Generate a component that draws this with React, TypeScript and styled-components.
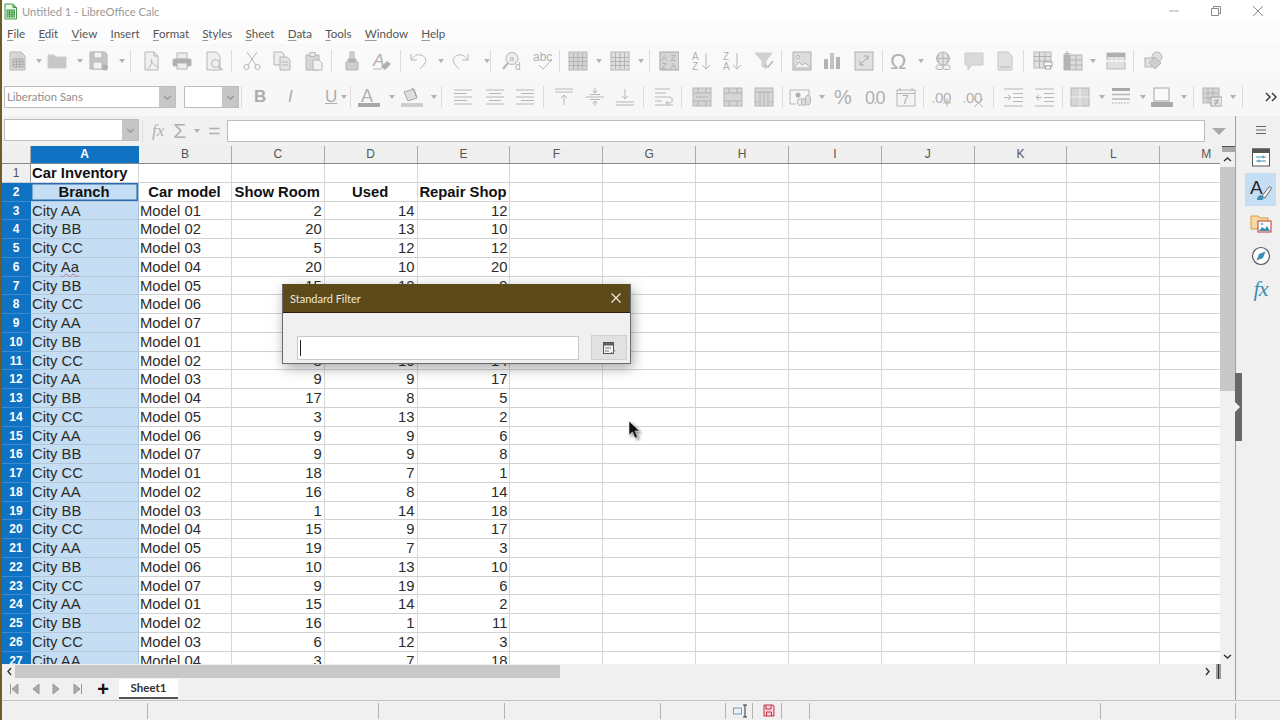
import React from 'react';
import styled, { createGlobalStyle } from 'styled-components';

const GlobalStyle = createGlobalStyle`
  html, body { margin: 0; padding: 0; background: #fff; }
  body { font-family: "Liberation Sans", Arial, sans-serif; }
`;

const Page = styled.div`
  position: relative;
  width: 1280px;
  height: 720px;
  box-sizing: border-box;
  border-left: 2px solid #6d5b28;
  overflow: hidden;
  display: flex;
  flex-direction: column;
  background: #f0f0f0;
`;

const TitleBar = styled.div`
  flex: none;
  height: 22px;
  background: #fff;
  display: flex;
  align-items: center;
  padding-left: 2px;
  gap: 5px;
  color: #9a9a9a;
  font: 11.2px Lato, sans-serif;
`;

const WindowControls = styled.div`
  margin-left: auto;
  display: flex;
  align-items: center;
  gap: 26px;
  padding-right: 14px;
  color: #999;
`;

const MenuBar = styled.div`
  flex: none;
  height: 22px;
  background: #fcfcfc;
  display: flex;
  align-items: center;
  padding-left: 5px;
  gap: 13.2px;
`;

const MenuItem = styled.span`
  font: 11.6px Lato, sans-serif;
  color: #555;
  u { text-decoration-color: #999; text-underline-offset: 2px; }
`;

const ToolRow = styled.div<{ $h: number; $bg: string }>`
  flex: none;
  height: ${(p) => p.$h}px;
  background: ${(p) => p.$bg};
  display: flex;
  align-items: center;
  overflow: hidden;
`;

const Slot = styled.div`
  flex: none;
  display: flex;
  align-items: center;
  height: 100%;
`;

const Sep = styled.div`
  width: 1px;
  height: 22px;
  background: #dcdcdc;
`;

const Caret = styled.div`
  width: 0;
  height: 0;
  border-left: 3.5px solid transparent;
  border-right: 3.5px solid transparent;
  border-top: 4px solid #b0b0b0;
`;

const Glyph = styled.span<{ $bold?: boolean; $italic?: boolean; $under?: boolean; $size?: number }>`
  color: #adadad;
  font-family: "Liberation Sans", sans-serif;
  font-size: ${(p) => p.$size || 17}px;
  font-weight: ${(p) => (p.$bold ? 700 : 400)};
  font-style: ${(p) => (p.$italic ? 'italic' : 'normal')};
  text-decoration: ${(p) => (p.$under ? 'underline' : 'none')};
`;

const Svg = styled.svg`
  display: block;
  flex: none;
  fill: none;
  stroke: #b6b6b6;
  stroke-width: 1;
  text {
    stroke: none;
    fill: #b0b0b0;
    font-family: "Liberation Sans", sans-serif;
  }
`;

const ComboBox = styled.div<{ $w: number }>`
  width: ${(p) => p.$w}px;
  height: 22px;
  box-sizing: border-box;
  display: flex;
  background: #fff;
  border: 1px solid #bdbdbd;
`;

const ComboText = styled.div`
  flex: 1;
  padding-left: 2px;
  font: 11.3px/20px Lato, sans-serif;
  color: #8e8e8e;
`;

const ComboButton = styled.div`
  flex: none;
  width: 16px;
  background: #c6c6c6;
  display: flex;
  align-items: center;
  justify-content: center;
`;

const Body = styled.div`
  flex: 1;
  min-height: 0;
  display: flex;
`;

const Main = styled.div`
  flex: none;
  width: 1233px;
  display: flex;
  flex-direction: column;
`;

const FormulaBar = styled.div`
  flex: none;
  height: 30px;
  display: flex;
  align-items: center;
  padding-left: 2px;
  background: #f1f1f1;
`;

const FormulaInput = styled.div`
  width: 978px;
  height: 22px;
  box-sizing: border-box;
  margin-left: 223px;
  background: #fff;
  border: 1px solid #bdbdbd;
`;

const FormulaTools = styled.div`
  position: absolute;
  left: 140px;
  top: 116px;
  height: 30px;
  display: flex;
  align-items: center;
`;

const NameBox = styled(ComboBox)`
  position: absolute;
  left: 2px;
  top: 119px;
`;

const FormulaCaret = styled.div`
  margin-left: 7px;
  width: 0;
  height: 0;
  border-left: 7px solid transparent;
  border-right: 7px solid transparent;
  border-top: 7px solid #a9a9a9;
`;

const SheetArea = styled.div`
  flex: none;
  height: 518px;
  display: flex;
`;

const SheetColumn = styled.div`
  flex: none;
  width: 1218px;
  display: flex;
  flex-direction: column;
  overflow: hidden;
`;

const tracks = '29px 108px repeat(12, 92.85px)';

const ColumnHeaders = styled.div`
  flex: none;
  height: 18px;
  display: grid;
  grid-template-columns: ${tracks};
  background: #efefef;
  box-sizing: border-box;
  border-bottom: 1px solid #888;
`;

const ColumnHeader = styled.div<{ $sel?: boolean }>`
  box-sizing: border-box;
  text-align: center;
  font-size: 12px;
  line-height: 17px;
  color: ${(p) => (p.$sel ? '#fff' : '#555')};
  font-weight: ${(p) => (p.$sel ? 700 : 400)};
  background: ${(p) => (p.$sel ? '#0f72c3' : 'transparent')};
  border-right: 1px solid ${(p) => (p.$sel ? '#0f72c3' : '#aaa')};
`;

const Grid = styled.div`
  flex: 1;
  min-height: 0;
  overflow: hidden;
  display: grid;
  grid-template-columns: ${tracks};
  grid-auto-rows: 18.76px;
  background: #fff;
`;

const RowHeader = styled.div<{ $sel?: boolean }>`
  box-sizing: border-box;
  text-align: center;
  font-size: 12px;
  line-height: 18px;
  color: ${(p) => (p.$sel ? '#fff' : '#555')};
  font-weight: ${(p) => (p.$sel ? 700 : 400)};
  background: ${(p) => (p.$sel ? '#0f72c3' : '#f0f0f0')};
  border-bottom: 1px solid ${(p) => (p.$sel ? '#3b8ad0' : '#ccc')};
  border-right: 1px solid ${(p) => (p.$sel ? '#0f72c3' : '#999')};
`;

const Cell = styled.div<{ $sel?: boolean; $bold?: boolean; $align?: string; $cursor?: boolean }>`
  box-sizing: border-box;
  padding: 0 2px 0 1px;
  font-size: 14.8px;
  line-height: 18px;
  white-space: nowrap;
  color: ${(p) => (p.$bold ? '#111' : '#2b2b2b')};
  font-weight: ${(p) => (p.$bold ? 700 : 400)};
  text-align: ${(p) => p.$align || 'left'};
  background: ${(p) => (p.$sel ? '#c5def3' : '#fff')};
  border-right: 1px solid ${(p) => (p.$sel ? '#a4c3de' : '#d8d8d8')};
  border-bottom: 1px solid ${(p) => (p.$sel ? '#b4c8da' : '#d2d2d2')};
  box-shadow: ${(p) => (p.$cursor ? 'inset 0 0 0 1.5px #2a6cb3' : 'none')};
`;

const Squiggle = styled.span`
  text-decoration: underline wavy #c0708a 1px;
  text-underline-offset: 1px;
`;

const VScroll = styled.div`
  flex: none;
  width: 15px;
  display: flex;
  flex-direction: column;
  background: #f0f0f0;
`;

const SplitMark = styled.div`
  flex: none;
  height: 6px;
  margin: 0 0 0 2px;
  background: #a8a8a8;
  border-top: 1px solid #555;
  box-sizing: border-box;
`;

const ScrollArrow = styled.div`
  flex: none;
  height: 15px;
  display: flex;
  align-items: center;
  justify-content: center;
`;

const VThumb = styled.div`
  flex: none;
  height: 224px;
  background: #c8c8c8;
`;

const Spacer = styled.div`
  flex: 1;
`;

const HScroll = styled.div`
  flex: none;
  height: 15px;
  padding-left: 2px;
  display: flex;
  align-items: center;
  background: #f0f0f0;
`;

const HArrow = styled.div`
  flex: none;
  width: 11px;
  display: flex;
  align-items: center;
  justify-content: center;
`;

const HThumb = styled.div`
  flex: none;
  width: 545px;
  height: 13px;
  background: #c8c8c8;
`;

const HHandle = styled.div`
  flex: none;
  width: 5px;
  height: 15px;
  margin: 0 14px 0 3px;
  background: #9c9c9c;
  display: flex;
  justify-content: center;
  &::after {
    content: '';
    width: 1px;
    background: #333;
  }
`;

const TabBar = styled.div`
  flex: 1;
  display: flex;
  align-items: flex-start;
  padding-left: 3px;
  box-sizing: border-box;
  background: #f0f0f0;
`;

const TabNav = styled.div`
  width: 20.5px;
  height: 20px;
  display: flex;
  align-items: center;
  justify-content: center;
`;

const AddTab = styled.div`
  width: 32px;
  height: 20px;
  font: 700 20px/20px "Liberation Sans", sans-serif;
  color: #111;
  text-align: center;
`;

const Tab = styled.div`
  width: 59px;
  height: 20px;
  box-sizing: border-box;
  background: #fff;
  border-bottom: 2px solid #555;
  text-align: center;
  font: 700 11.5px/18px Lato, sans-serif;
  color: #333;
`;

const Sidebar = styled.div`
  flex: 1;
  box-sizing: border-box;
  border-left: 1px solid #a0a0a0;
  padding: 0 0 0 9px;
  background: #f0f0f0;
  display: flex;
  flex-direction: column;
`;

const SideItem = styled.div<{ $active?: boolean; $h?: number }>`
  flex: none;
  box-sizing: border-box;
  width: 31px;
  height: ${(p) => p.$h || 33}px;
  display: flex;
  align-items: center;
  justify-content: center;
  background: ${(p) => (p.$active ? '#c5def3' : 'transparent')};
`;

const SideMenu = styled(SideItem)`
  padding-top: 4px;
`;

const StatusBar = styled.div`
  flex: none;
  height: 20px;
  box-sizing: border-box;
  border-top: 1px solid #c4c4c4;
  background: #f0f0f0;
  display: flex;
  align-items: center;
`;

const StatusCell = styled.div<{ $w: number; $plain?: boolean; $pad?: number }>`
  flex: none;
  box-sizing: border-box;
  width: ${(p) => p.$w}px;
  height: 16px;
  padding-left: ${(p) => p.$pad || 0}px;
  display: flex;
  align-items: center;
  justify-content: center;
  border-right: 1px solid ${(p) => (p.$plain ? 'transparent' : '#b4b4b4')};
`;

const Dialog = styled.div`
  position: absolute;
  left: 280px;
  top: 284px;
  width: 349px;
  height: 80px;
  box-sizing: border-box;
  border: 1px solid #6b6b6b;
  border-top: none;
  background: #f0f0f0;
  box-shadow: 2px 4px 12px rgba(0, 0, 0, 0.35);
  display: flex;
  flex-direction: column;
`;

const DialogTitle = styled.div`
  flex: none;
  height: 29px;
  box-sizing: border-box;
  padding: 0 8px 0 7px;
  background: #5c4a1b;
  border-bottom: 1px solid #2c1c08;
  display: flex;
  align-items: center;
  justify-content: space-between;
  color: #ece8da;
  font: 11px Lato, sans-serif;
`;

const DialogBody = styled.div`
  flex: 1;
  display: flex;
  align-items: flex-end;
  gap: 12px;
  padding: 0 3px 3px 14px;
`;

const RefInput = styled.div`
  width: 283px;
  height: 24px;
  box-sizing: border-box;
  background: #fff;
  border: 1px solid #c8c8c8;
  padding: 3px 0 0 2px;
  &::before {
    content: '';
    display: block;
    width: 1px;
    height: 16px;
    background: #222;
  }
`;

const RefButton = styled.div`
  width: 36px;
  height: 25px;
  box-sizing: border-box;
  background: #e1e1e1;
  border: 1px solid #cfcfcf;
  display: flex;
  align-items: center;
  justify-content: center;
`;

const SplitHandle = styled.div`
  position: absolute;
  left: 1233px;
  top: 373px;
  width: 7px;
  height: 68px;
  background: #686868;
  display: flex;
  align-items: center;
  &::after {
    content: '';
    border-left: 5px solid #f4f4f4;
    border-top: 5px solid transparent;
    border-bottom: 5px solid transparent;
  }
`;

const Pointer = styled.div`
  position: absolute;
  left: 626px;
  top: 420px;
  filter: drop-shadow(2px 2px 1.5px rgba(0, 0, 0, 0.45));
`;

const FILL = '#d6d6d6';
const MID = '#c6c6c6';
const LINE = '#b2b2b2';

const gridLines = (
  <path d="M1 6.5h18M1 10.5h18M1 14.5h18M5.5 2v16M10 2v16M14.5 2v16" stroke={LINE} />
);

const hLines = (ys: [number, number][]) =>
  ys.map(([y, w], i) => {
    return <line key={i} x1={w < 0 ? 19 + w : 1} x2={w < 0 ? 19 : 1 + w} y1={y} y2={y} />;
  });

const ICONS: Record<string, React.ReactNode> = {
  new: (
    <>
      <path d="M2 1h11l4 4v14H2z" fill={FILL} />
      <path d="M5 8h10v8H5zM5 10.7h10M5 13.3h10M8.3 8v8M11.7 8v8" stroke="#a5a5a5" />
    </>
  ),
  open: <path d="M1 4h6l2 2h10v11H1z" fill={MID} stroke="#cdcdcd" />,
  save: (
    <>
      <path d="M1 1h15l2 2v15H1z" fill={MID} />
      <rect x="5" y="1" width="8" height="6" fill="#f2f2f2" />
      <rect x="4" y="11" width="9" height="7" fill="#f2f2f2" />
      <circle cx="16" cy="16.5" r="3" fill="#b0b0b0" stroke="none" />
    </>
  ),
  pdf: (
    <>
      <path d="M3 1h9l4 4v14H3z" fill="#f0f0f0" />
      <path d="M12 1v4h4M6 18c3-3 4-7 3.5-9s-1 4 7 7" />
    </>
  ),
  print: (
    <>
      <rect x="5" y="2" width="10" height="6" fill="#eee" />
      <rect x="1" y="8" width="18" height="7" rx="1" fill="#aeaeae" />
      <rect x="5" y="12" width="10" height="6" fill="#eee" />
    </>
  ),
  preview: (
    <>
      <path d="M3 1h9l4 4v14H3z" fill="#f0f0f0" />
      <circle cx="11.5" cy="12.5" r="4" fill="#eee" />
      <path d="M14.5 15.5l4 3.5" strokeWidth="1.5" />
    </>
  ),
  cut: (
    <>
      <circle cx="4.5" cy="16" r="2.6" />
      <circle cx="15.5" cy="16" r="2.6" />
      <path d="M6 14L15 1M14 14L5 1" />
    </>
  ),
  copy: (
    <>
      <path d="M2 1h8l2 2v11H2z" fill="#eee" />
      <path d="M8 6h7l3 3v10H8z" fill="#e4e4e4" />
      <path d="M10 11h6M10 14h6" />
    </>
  ),
  paste: (
    <>
      <path d="M2 4h13v15H2z" fill={FILL} />
      <rect x="6" y="1.5" width="5" height="4" fill="#eee" />
      <path d="M9 9h6l3 3v7H9z" fill="#f2f2f2" />
    </>
  ),
  clone: (
    <>
      <rect x="8" y="1" width="4" height="7" fill="#d4d4d4" />
      <path d="M6 8h8v3H6z" fill="#b4b4b4" />
      <path d="M4 11h12v8H4z" fill="#cdcdcd" />
    </>
  ),
  clear: (
    <>
      <text x="1" y="15" fontSize="17" fontStyle="italic">A</text>
      <path d="M9 16l6-6 4 3-6 6z" fill="#b0b0b0" stroke="none" />
      <path d="M1 18h9" />
    </>
  ),
  undo: <path d="M2 3v6h6M2 9c3-4 6-6 10-5 4 1 6 5 4 8-1 2-3 4-5 6" />,
  redo: <path d="M18 3v6h-6M18 9c-3-4-6-6-10-5-4 1-6 5-4 8 1 2 3 4 5 6" />,
  find: (
    <>
      <circle cx="10" cy="7.5" r="6" fill="#eee" />
      <path d="M6 12L1 18" strokeWidth="2" />
      <text x="7.5" y="10" fontSize="8">a</text>
      <text x="13" y="19" fontSize="10">d</text>
    </>
  ),
  spell: (
    <>
      <text x="0" y="10" fontSize="12">abc</text>
      <path d="M6 14l4 4 9-9" />
    </>
  ),
  rows: (
    <>
      <rect x="1" y="1" width="18" height="18" fill={FILL} />
      {gridLines}
    </>
  ),
  cols: (
    <>
      <rect x="1" y="1" width="18" height="18" fill="#e0e0e0" />
      {gridLines}
    </>
  ),
  sort: (
    <>
      <rect x="1" y="1" width="19" height="18" fill={FILL} stroke="#a5a5a5" />
      <text x="2.5" y="9.5" fontSize="8.5">A</text>
      <text x="2.5" y="17.5" fontSize="8.5">Z</text>
      <text x="11.5" y="9.5" fontSize="8.5">Z</text>
      <text x="11.5" y="17.5" fontSize="8.5">A</text>
    </>
  ),
  asc: (
    <>
      <text x="0" y="9" fontSize="10">A</text>
      <text x="0" y="19" fontSize="10">Z</text>
      <path d="M14 2v16M10 14l4 4 4-4" />
    </>
  ),
  desc: (
    <>
      <text x="0" y="9" fontSize="10">Z</text>
      <text x="0" y="19" fontSize="10">A</text>
      <path d="M14 2v16M10 14l4 4 4-4" />
    </>
  ),
  filter: (
    <>
      <path d="M1 2h17l-6 8v8l-4-3v-5z" fill="#d0d0d0" stroke="#d0d0d0" />
      <path d="M11 14l3 2 5-6" strokeWidth="1.5" />
    </>
  ),
  image: (
    <>
      <rect x="1" y="1" width="18" height="18" fill="#dcdcdc" stroke="#b0b0b0" />
      <path d="M2 17l5-6 3 3 3-2 6 5z" fill="#f2f2f2" />
      <circle cx="6" cy="6" r="1.6" fill="#eee" />
    </>
  ),
  chart: (
    <>
      <rect x="2" y="8" width="4" height="10" fill="#b4b4b4" stroke="none" />
      <rect x="8" y="2" width="4" height="16" fill="#c2c2c2" stroke="none" />
      <rect x="14" y="6" width="4" height="12" fill="#b4b4b4" stroke="none" />
    </>
  ),
  pivot: (
    <>
      <rect x="1" y="1" width="18" height="18" fill="#e0e0e0" stroke="#b0b0b0" />
      <path d="M6 14L14 6M10 5h4v4M6 10v4h4" stroke="#a8a8a8" />
    </>
  ),
  omega: <text x="1" y="18" fontSize="22">Ω</text>,
  link: (
    <>
      <circle cx="10" cy="7.5" r="6.5" fill="#e0e0e0" />
      <path d="M3.5 7.5h13M10 1v13M6.5 2c-2 3-2 7 0 10.5M13.5 2c2 3 2 7 0 10.5" />
      <rect x="3" y="14" width="7" height="4.5" rx="2" fill="#f2f2f2" />
      <rect x="10" y="14" width="7" height="4.5" rx="2" fill="#f2f2f2" />
    </>
  ),
  comment: <path d="M1 2h18v12H8l-4 5v-5H1z" fill="#dadada" stroke="#cbcbcb" />,
  header: (
    <>
      <path d="M3 1h10l4 4v14H3z" fill="#e0e0e0" stroke="#c6c6c6" />
      <path d="M5 16h10" />
    </>
  ),
  printRange: (
    <>
      <rect x="1" y="1" width="17" height="16" fill="#e0e0e0" />
      <path d="M1 5.5h17M1 10h17M6.5 1v16M12 1v16" stroke={LINE} />
      <rect x="11" y="11" width="8" height="4" fill="#fff" stroke="#a5a5a5" />
      <rect x="12.5" y="15" width="5" height="3" fill="#fff" stroke="#a5a5a5" />
    </>
  ),
  freeze: (
    <>
      <rect x="1" y="4" width="18" height="15" fill="#dcdcdc" />
      <rect x="1" y="4" width="6" height="15" fill="#b4b4b4" stroke="none" />
      <path d="M1 9h18M1 14h18M7 4v15M13 4v15" stroke={LINE} />
      <path d="M4 0v5M1.5 2.5h5" stroke="#b0b0b0" />
    </>
  ),
  split: (
    <>
      <rect x="1" y="2" width="18" height="16" fill="#e0e0e0" />
      <rect x="1" y="2" width="18" height="4" fill="#b0b0b0" stroke="none" />
      <path d="M0 10h20" stroke="#fff" strokeWidth="1.5" strokeDasharray="3 1.5" />
    </>
  ),
  draw: (
    <>
      <circle cx="13" cy="6" r="5" fill="#e0e0e0" />
      <rect x="1" y="7" width="9" height="9" fill="#e0e0e0" />
      <path d="M11 6l6 6-6 6-6-6z" fill="#cfcfcf" />
    </>
  ),
  fontColor: (
    <>
      <text x="3" y="14.5" fontSize="18">A</text>
      <rect x="0" y="16" width="22" height="4.5" fill="#a9a9a9" stroke="none" />
    </>
  ),
  bgColor: (
    <>
      <path d="M3 5l10-3 3 9-9 3z" fill="#dedede" stroke="#a8a8a8" />
      <path d="M11 1c2 3 3 3 4 8" stroke="#999" />
      <rect x="0" y="16" width="22" height="4.5" fill="#cfcfcf" stroke="none" />
    </>
  ),
  alignLeft: <>{hLines([[3, 18], [6.5, 13], [10, 18], [13.5, 13], [17, 18]])}</>,
  alignCenter: <path d="M1 3h18M4 6.5h12M1 10h18M4 13.5h12M1 17h18" />,
  alignRight: <>{hLines([[3, 18], [6.5, -13], [10, 18], [13.5, -13], [17, 18]])}</>,
  vTop: <path d="M1 2h18M1 5h18M10 18V8M7 11l3-3 3 3" />,
  vMid: <path d="M1 10h18M5 7.5h10M5 12.5h10M10 1v5M7.5 3.5L10 6l2.500-2.500M10 19v-5M7.500 16.500L10 14l2.500 2.500" />,
  vBot: <path d="M1 18h18M1 15h18M10 2v10M7 9l3 3 3-3" />,
  wrap: <path d="M1 2h15M1 6h11M1 10h15c3 0 3 6 0 6h-4M14 14l-2 2 2 2M1 14h7M1 18h18" />,
  merge: (
    <>
      <rect x="1" y="1" width="18" height="18" fill={FILL} />
      <path d="M1 6h18M1 14h18M6 1v5M14 1v5M6 14v5M14 14v5M4 10h12" stroke={LINE} />
    </>
  ),
  mergeOnly: (
    <>
      <rect x="1" y="1" width="18" height="18" fill={FILL} />
      <path d="M1 6h18M1 14h18M6 1v5M14 1v5M6 14v5M14 14v5" stroke={LINE} />
    </>
  ),
  splitCells: (
    <>
      <rect x="1" y="1" width="18" height="18" fill={FILL} />
      <path d="M1 5h18M6 5v14M10 5v14M14 5v14M1 15h4M15 15h4" stroke={LINE} />
    </>
  ),
  currency: (
    <>
      <path d="M7 17H1V3h19v5" />
      <circle cx="9" cy="8" r="2.500" fill="#b0b0b0" stroke="none" />
      <ellipse cx="11" cy="15" rx="2.500" ry="3.500" fill="#eee" />
      <ellipse cx="15" cy="15" rx="2.500" ry="3.500" fill="#ddd" />
      <ellipse cx="19" cy="13" rx="2.500" ry="5" fill="#ddd" />
    </>
  ),
  number: (
    <>
      <text x="0" y="17" fontSize="18">0</text>
      <text x="10.5" y="17" fontSize="18">0</text>
      <circle cx="10.500" cy="16" r="0.800" fill="#aaa" stroke="none" />
    </>
  ),
  date: (
    <>
      <rect x="1" y="3" width="18" height="16" fill="#f4f4f4" />
      <path d="M1 6.500h18M4 1v3M16 1v3" />
      <text x="6" y="17" fontSize="12">7</text>
    </>
  ),
  decPlus: (
    <>
      <circle cx="1.500" cy="15" r="0.800" fill="#aaa" stroke="none" />
      <text x="3" y="15.500" fontSize="15">0</text>
      <text x="11" y="15.500" fontSize="15">0</text>
      <path d="M15 11v9M11 16h8" />
    </>
  ),
  decMinus: (
    <>
      <circle cx="1.500" cy="15" r="0.800" fill="#aaa" stroke="none" />
      <text x="3" y="15.500" fontSize="15">0</text>
      <text x="11" y="15.500" fontSize="15">0</text>
      <path d="M11 12l9 8M20 12l-9 8" />
    </>
  ),
  indent: <path d="M1 2h19M10 6.500h10M10 10.500h10M10 14.500h10M1 19h19M1 10.500h6M5 8l3 2.500L5 13" />,
  outdent: <path d="M1 2h19M10 6.500h10M10 10.500h10M10 14.500h10M1 19h19M2 10.500h6M5 8l-3 2.500L5 13" />,
  borders: (
    <>
      <rect x="1" y="1" width="18" height="18" fill={FILL} />
      <path d="M1 10h18M10 1v18" stroke="#eee" />
    </>
  ),
  borderStyle: (
    <>
      <rect x="0" y="1" width="18" height="3" fill="#a8a8a8" stroke="none" />
      <path d="M0 7.500h18M0 12h18" strokeWidth="1.500" />
      <path d="M0 16h18" strokeDasharray="2 1" />
    </>
  ),
  borderColor: (
    <>
      <rect x="3" y="1" width="15" height="13" fill="#fafafa" stroke="#a5a5a5" />
      <rect x="0" y="15" width="22" height="5" fill="#a9a9a9" stroke="none" />
    </>
  ),
  cond: (
    <>
      <rect x="1" y="1" width="16" height="15" fill={FILL} />
      <path d="M1 6h16M1 11h16M6 1v15M11 1v15" stroke={LINE} />
      <rect x="9" y="10" width="11" height="9" fill="#e6e6e6" stroke="#a5a5a5" />
      <path d="M12 13.500h5M12 16h5M16 12l-3 6" stroke="#a5a5a5" />
    </>
  ),
};

const Icon = ({ name, w = 20, h = 20 }: { name: string; w?: number; h?: number }) => (
  <Svg width={w} height={h} viewBox={`0 0 ${w} ${h}`}>
    {ICONS[name]}
  </Svg>
);

type Tool = [number, string];

const TOOLS_TOP: Tool[] = [
  [8, 'new'], [36, '^'], [47, 'open'], [77, '^'], [89, 'save'], [119, '^'], [130, '|'],
  [142, 'pdf'], [172, 'print'], [204, 'preview'], [231, '|'], [242, 'cut'], [272, 'copy'],
  [304, 'paste'], [331, '|'], [342, 'clone'], [372, 'clear'], [400, '|'], [409, 'undo'],
  [438, '^'], [450, 'redo'], [484, '^'], [490, '|'], [502, 'find'], [533, 'spell'],
  [559, '|'], [568, 'rows'], [596, '^'], [610, 'cols'], [638, '^'], [649, '|'], [659, 'sort'],
  [692, 'asc'], [723, 'desc'], [754, 'filter'], [781, '|'], [792, 'image'], [822, 'chart'],
  [854, 'pivot'], [882, '|'], [889, 'omega'], [918, '^'], [933, 'link'], [964, 'comment'],
  [995, 'header'], [1023, '|'], [1033, 'printRange'], [1063, 'freeze'], [1090, '^'],
  [1106, 'split'], [1133, '|'], [1144, 'draw'],
];

const TOOLS_BOTTOM: Tool[] = [
  [241, '|'], [254, 'B'], [288, 'I'], [325, 'U'], [341, '^'], [350, '|'], [358, 'fontColor'],
  [389, '^'], [401, 'bgColor'], [431, '^'], [441, '|'], [453, 'alignLeft'], [485, 'alignCenter'],
  [515, 'alignRight'], [543, '|'], [554, 'vTop'], [585, 'vMid'], [615, 'vBot'], [643, '|'],
  [654, 'wrap'], [681, '|'], [692, 'merge'], [723, 'mergeOnly'], [754, 'splitCells'],
  [782, '|'], [789, 'currency'], [819, '^'], [834, '%'], [865, 'number'], [896, 'date'],
  [923, '|'], [932, 'decPlus'], [963, 'decMinus'], [993, '|'], [1003, 'indent'],
  [1034, 'outdent'], [1062, '|'], [1070, 'borders'], [1099, '^'], [1112, 'borderStyle'],
  [1140, '^'], [1151, 'borderColor'], [1181, '^'], [1193, '|'], [1202, 'cond'], [1230, '^'],
  [1242, '|'], [1264, '>>'],
];

const WIDE = ['fontColor', 'bgColor', 'borderColor', 'currency', 'decPlus', 'decMinus', 'number', 'omega'];

const Chevrons = () => (
  <Svg width="14" height="12" viewBox="0 0 14 12" style={{ stroke: '#333', strokeWidth: 1.4 }}>
    <path d="M2 2l4 4-4 4M8 2l4 4-4 4" />
  </Svg>
);

const renderTool = (name: string) => {
  if (name === '|') return <Sep />;
  if (name === '^') return <Caret />;
  if (name === 'B') return <Glyph $bold>B</Glyph>;
  if (name === 'I') return <Glyph $italic>I</Glyph>;
  if (name === 'U') return <Glyph $under>U</Glyph>;
  if (name === '%') return <Glyph $size={20}>%</Glyph>;
  if (name === '>>') return <Chevrons />;
  return <Icon name={name} w={WIDE.includes(name) ? 22 : 20} />;
};

const Tools = ({ items }: { items: Tool[] }) => (
  <>
    {items.map(([x, name], i) => {
      const next = items[i + 1] ? items[i + 1][0] : x + 14;
      return (
        <Slot key={i} style={{ width: next - x }}>
          {renderTool(name)}
        </Slot>
      );
    })}
  </>
);

const SmallChevron = ({ dir, color = '#333' }: { dir: 'up' | 'down' | 'left' | 'right'; color?: string }) => {
  const d = {
    up: 'M1 6l3.500-3L8 6',
    down: 'M1 3l3.500 3L8 3',
    left: 'M6 1L3 4.500 6 8',
    right: 'M3 1l3 3.500L3 8',
  }[dir];
  return (
    <Svg width="9" height="9" viewBox="0 0 9 9" style={{ stroke: color, strokeWidth: 1.4 }}>
      <path d={d} />
    </Svg>
  );
};

const TabNavIcon = ({ kind }: { kind: 'first' | 'prev' | 'next' | 'last' }) => {
  const d = {
    first: 'M10 2v10L4 7zM2.500 2v10',
    prev: 'M10 2v10L4 7z',
    next: 'M4 2v10l6-5z',
    last: 'M4 2v10l6-5zM11.500 2v10',
  }[kind];
  return (
    <Svg width="14" height="14" viewBox="0 0 14 14" style={{ fill: '#aaa', stroke: '#999' }}>
      <path d={d} />
    </Svg>
  );
};

const CalcLogo = () => (
  <Svg width="13" height="17" viewBox="0 0 13 17" style={{ stroke: '#3f9a4a' }}>
    <path d="M1 1h8l3.500 3.500V16H1z" fill="#eaf6e6" />
    <path d="M9 1v3.500h3.500" fill="#8cc66e" />
    <rect x="3" y="7" width="7.500" height="7" fill="#bfe3b0" />
    <path d="M3 9.300h7.500M3 11.700h7.500M5.500 7v7M8 7v7" />
  </Svg>
);

const SideIcons = {
  menu: (
    <Svg width="14" height="10" viewBox="0 0 14 10" style={{ stroke: '#666' }}>
      <path d="M2 1.500h10M2 5h10M2 8.500h10" />
    </Svg>
  ),
  props: (
    <Svg width="20" height="20" viewBox="0 0 20 20" style={{ stroke: '#555' }}>
      <rect x="1.500" y="2" width="17" height="17" fill="#fff" />
      <rect x="1.500" y="2" width="17" height="3.500" fill="#555" />
      <path d="M5 10h10M5 14h10" stroke="#3d8fb5" />
      <path d="M12 8.500v3M8 12.500v3" stroke="#3d8fb5" />
    </Svg>
  ),
  styles: (
    <Svg width="24" height="24" viewBox="0 0 24 24" style={{ stroke: '#333' }}>
      <text x="1" y="16" fontSize="19" style={{ fill: '#2a2a2a' }}>A</text>
      <path d="M13 18l7-9c1-1 3 0 2 2l-6 9z" fill="#eef4f9" stroke="#666" />
      <path d="M8 22c0-3 3-6 5-4s2 3 0 4z" fill="#3d8fb5" stroke="none" />
    </Svg>
  ),
  gallery: (
    <Svg width="22" height="20" viewBox="0 0 22 20">
      <path d="M1 3h7l2 2h8v11H1z" fill="#f8d9a3" stroke="#d99b45" />
      <rect x="8" y="8" width="13" height="11" fill="#fff" stroke="#b33a2a" />
      <path d="M9 18l3-4 3 2 2-3 3 5z" fill="#3d8fb5" stroke="none" />
      <circle cx="12" cy="11" r="1.300" fill="#7fb5d0" stroke="none" />
    </Svg>
  ),
  nav: (
    <Svg width="20" height="20" viewBox="0 0 20 20" style={{ stroke: '#555' }}>
      <circle cx="10" cy="10" r="8.500" fill="#fff" strokeWidth="1.200" />
      <path d="M14.500 5.500L12 12l-6.500 2.500L8 8z" fill="#3d8fb5" stroke="none" />
    </Svg>
  ),
};

const FxIcon = styled.span`
  font: italic 22px "Liberation Serif", serif;
  color: #3d8fb5;
  letter-spacing: -1px;
`;

const FxTool = styled.span`
  font: italic 17px "Liberation Serif", serif;
  color: #b0b0b0;
`;

const FormulaGlyph = styled.span`
  font: 21px "Liberation Sans", sans-serif;
  color: #b0b0b0;
`;

const Gap = styled.span<{ $w: number }>`
  flex: none;
  width: ${(p) => p.$w}px;
`;

const COLS = ['A', 'B', 'C', 'D', 'E', 'F', 'G', 'H', 'I', 'J', 'K', 'L', 'M'];
const CITIES = ['City AA', 'City BB', 'City CC'];
const MENU = ['File', 'Edit', 'View', 'Insert', 'Format', 'Styles', 'Sheet', 'Data', 'Tools', 'Window', 'Help'];

const NUMBERS = [
  [2, 14, 12], [20, 13, 10], [5, 12, 12], [20, 10, 20], [15, 12, 9], [7, 11, 4], [12, 6, 15],
  [4, 18, 7], [8, 16, 14], [9, 9, 17], [17, 8, 5], [3, 13, 2], [9, 9, 6], [9, 9, 8], [18, 7, 1],
  [16, 8, 14], [1, 14, 18], [15, 9, 17], [19, 7, 3], [10, 13, 10], [9, 19, 6], [15, 14, 2],
  [16, 1, 11], [6, 12, 3], [3, 7, 18],
];

const HEADINGS = ['Car model', 'Show Room', 'Used', 'Repair Shop'];

const cityFor = (i: number) => CITIES[i % 3];
const modelFor = (i: number) => `Model 0${(i % 7) + 1}`;

const EmptyCells = ({ count }: { count: number }) => (
  <>
    {Array.from({ length: count }, (_, i) => (
      <Cell key={i} />
    ))}
  </>
);

const SheetGrid = () => (
  <Grid>
    <RowHeader>1</RowHeader>
    <Cell $bold>Car Inventory</Cell>
    <EmptyCells count={12} />

    <RowHeader $sel>2</RowHeader>
    <Cell $bold $sel $cursor $align="center">Branch</Cell>
    {HEADINGS.map((h) => (
      <Cell key={h} $bold $align="center">{h}</Cell>
    ))}
    <EmptyCells count={8} />

    {NUMBERS.map((vals, i) => (
      <React.Fragment key={i}>
        <RowHeader $sel>{i + 3}</RowHeader>
        <Cell $sel>
          {i === 3 ? (
            <>City <Squiggle>Aa</Squiggle></>
          ) : (
            cityFor(i)
          )}
        </Cell>
        <Cell>{modelFor(i)}</Cell>
        {vals.map((v, j) => (
          <Cell key={j} $align="right">{v}</Cell>
        ))}
        <EmptyCells count={8} />
      </React.Fragment>
    ))}
  </Grid>
);

const App = () => (
  <>
    <GlobalStyle />
    <Page>
      <TitleBar>
        <CalcLogo />
        <span>Untitled 1 - LibreOffice Calc</span>
        <WindowControls>
          <Svg width="16" height="12" viewBox="0 0 16 12" style={{ stroke: '#aaa' }}>
            <path d="M3 6h10" />
          </Svg>
          <Svg width="16" height="12" viewBox="0 0 16 12" style={{ stroke: '#888' }}>
            <path d="M3.500 3.500h7v7h-7zM5.500 3.500v-2h7v7h-2" />
          </Svg>
          <Svg width="16" height="12" viewBox="0 0 16 12" style={{ stroke: '#888' }}>
            <path d="M3 1l10 10M13 1L3 11" />
          </Svg>
        </WindowControls>
      </TitleBar>

      <MenuBar>
        {MENU.map((m) => (
          <MenuItem key={m}>
            <u>{m[0]}</u>
            {m.slice(1)}
          </MenuItem>
        ))}
      </MenuBar>

      <ToolRow $h={34} $bg="#f9f9f9">
        <Gap $w={6} />
        <Tools items={TOOLS_TOP} />
      </ToolRow>

      <ToolRow $h={38} $bg="#f7f7f7">
        <Gap $w={2} />
        <ComboBox $w={172}>
          <ComboText>Liberation Sans</ComboText>
          <ComboButton>
            <SmallChevron dir="down" color="#999" />
          </ComboButton>
        </ComboBox>
        <Gap $w={8} />
        <ComboBox $w={55}>
          <ComboText />
          <ComboButton>
            <SmallChevron dir="down" color="#999" />
          </ComboButton>
        </ComboBox>
        <Gap $w={2} />
        <Tools items={TOOLS_BOTTOM} />
      </ToolRow>

      <Body>
        <Main>
          <FormulaBar>
            <FormulaInput />
            <FormulaCaret />
          </FormulaBar>

          <SheetArea>
            <SheetColumn>
              <ColumnHeaders>
                <ColumnHeader />
                {COLS.map((c, i) => (
                  <ColumnHeader key={c} $sel={i === 0}>{c}</ColumnHeader>
                ))}
              </ColumnHeaders>
              <SheetGrid />
            </SheetColumn>
            <VScroll>
              <SplitMark />
              <ScrollArrow>
                <SmallChevron dir="up" />
              </ScrollArrow>
              <VThumb />
              <Spacer />
              <ScrollArrow>
                <SmallChevron dir="down" />
              </ScrollArrow>
            </VScroll>
          </SheetArea>

          <HScroll>
            <HArrow>
              <SmallChevron dir="left" />
            </HArrow>
            <HThumb />
            <Spacer />
            <HArrow>
              <SmallChevron dir="right" />
            </HArrow>
            <HHandle />
          </HScroll>

          <TabBar>
            <TabNav><TabNavIcon kind="first" /></TabNav>
            <TabNav><TabNavIcon kind="prev" /></TabNav>
            <TabNav><TabNavIcon kind="next" /></TabNav>
            <TabNav><TabNavIcon kind="last" /></TabNav>
            <AddTab>+</AddTab>
            <Tab>Sheet1</Tab>
          </TabBar>
        </Main>

        <Sidebar>
          <SideMenu $h={24}>{SideIcons.menu}</SideMenu>
          <SideItem>{SideIcons.props}</SideItem>
          <SideItem $active>{SideIcons.styles}</SideItem>
          <SideItem>{SideIcons.gallery}</SideItem>
          <SideItem>{SideIcons.nav}</SideItem>
          <SideItem><FxIcon>fx</FxIcon></SideItem>
        </Sidebar>
      </Body>

      <StatusBar>
        <StatusCell $w={146} />
        <StatusCell $w={231} />
        <StatusCell $w={126} />
        <StatusCell $w={156} />
        <StatusCell $w={65} />
        <StatusCell $w={27} $pad={3}>
          <Svg width="16" height="14" viewBox="0 0 16 14" style={{ stroke: '#666' }}>
            <rect x="0.500" y="4" width="8" height="6" stroke="#7a9cb8" fill="#e8f0f7" />
            <path d="M12 1v12M10 1h4M10 13h4" stroke="#333" />
          </Svg>
        </StatusCell>
        <StatusCell $w={29} $pad={3}>
          <Svg width="12" height="13" viewBox="0 0 12 13" style={{ stroke: '#c03048' }}>
            <path d="M1 1h9l1 1v10H1z" fill="#f7d5da" />
            <path d="M3 1v4h5V1M3.500 12V8h5v4" />
          </Svg>
        </StatusCell>
        <StatusCell $w={28} />
        <StatusCell $w={291} />
        <StatusCell $w={135} />
        <StatusCell $w={44} $plain />
      </StatusBar>

      <NameBox $w={135}>
        <ComboText />
        <ComboButton>
          <SmallChevron dir="down" color="#999" />
        </ComboButton>
      </NameBox>

      <FormulaTools>
        <Sep />
        <Gap $w={9} />
        <FxTool>fx</FxTool>
        <Gap $w={9} />
        <FormulaGlyph>Σ</FormulaGlyph>
        <Gap $w={8} />
        <Caret />
        <Gap $w={8} />
        <FormulaGlyph>=</FormulaGlyph>
      </FormulaTools>

      <SplitHandle />

      <Dialog>
        <DialogTitle>
          <span>Standard Filter</span>
          <Svg width="12" height="12" viewBox="0 0 12 12" style={{ stroke: '#f2e8cf', strokeWidth: 1.3 }}>
            <path d="M1.500 1.500l9 9M10.500 1.500l-9 9" />
          </Svg>
        </DialogTitle>
        <DialogBody>
          <RefInput />
          <RefButton>
            <Svg width="14" height="14" viewBox="0 0 14 14" style={{ stroke: '#555' }}>
              <rect x="1.500" y="1.500" width="10" height="11" fill="#f4f4f4" />
              <path d="M1.500 1.500h10v2.500h-10z" fill="#666" />
              <path d="M3 7h6M3 10h4" stroke="#777" />
              <path d="M9 11l1.500 1.500L13 9" stroke="#4a8fb5" />
            </Svg>
          </RefButton>
        </DialogBody>
      </Dialog>

      <Pointer>
        <Svg width="14" height="20" viewBox="0 0 14 20" style={{ fill: '#111', stroke: '#eee', strokeWidth: 0.6 }}>
          <path d="M1 1v14l3.500-3 2.500 6 2.500-1-2.500-6h4.500z" />
        </Svg>
      </Pointer>
    </Page>
  </>
);

export default App;
